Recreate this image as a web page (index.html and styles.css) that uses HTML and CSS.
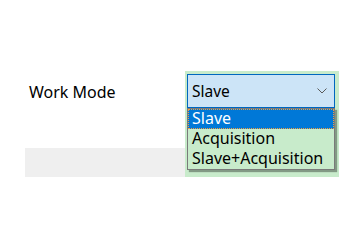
FILE: index.html
```html
<!DOCTYPE html>
<html lang="en">
<head>
    <meta charset="UTF-8">
    <meta name="viewport" content="width=device-width, initial-scale=1.0">
    <title>Work Mode</title>
    <link rel="stylesheet" href="styles.css">
</head>
<body>
    <div class="page">
        <!-- Work mode row -->
        <div class="row">
            <span class="label">Work Mode</span>
            <div class="combo">
                <div class="select">
                    <span>Slave</span>
                    <svg class="chevron" width="10" height="6" viewBox="0 0 10 6">
                        <polyline points="0.5,0.5 5,5 9.5,0.5" fill="none" stroke="#5a5a5a" stroke-width="1"/>
                    </svg>
                </div>
            </div>
        </div>

        <!-- Next row (covered by the open list) -->
        <div class="bar"></div>

        <!-- Open dropdown list -->
        <div class="popup">
            <ul class="list">
                <li class="active">Slave</li>
                <li>Acquisition</li>
                <li>Slave+Acquisition</li>
            </ul>
        </div>
    </div>
</body>
</html>
```

FILE: styles.css
```css
/* General Styles */
html, body {
    margin: 0;
    padding: 0;
    background-color: #fff;
}
body {
    font-family: "Noto Sans", "Open Sans", sans-serif;
    color: #000;
}
.page {
    position: relative;
    padding: 71px 0 0 25px;
}

/* Work mode row */
.row {
    display: flex;
    align-items: center;
    height: 37px;
}
.label {
    width: 160px;
    padding-left: 4px;
    box-sizing: border-box;
    font-size: 16px;
    margin-top: 4px;
}
.combo {
    background-color: #c8ebcb;
    padding: 3px 4px 0 2px;
    width: 148px;
}
.select {
    height: 34px;
    box-sizing: border-box;
    border: 1px solid #0067c0;
    background-color: #cce4f7;
    display: flex;
    align-items: center;
    justify-content: space-between;
    padding: 0 7px 0 4px;
    font-size: 15.5px;
}
.chevron {
    display: block;
}

/* Next row */
.bar {
    margin-top: 40px;
    width: 312px;
    height: 29px;
    background-color: #efefef;
}

/* Dropdown list */
.popup {
    position: absolute;
    top: 108px;
    left: 185px;
    width: 148px;
    padding: 0 4px 7px 2px;
    background-color: #c8ebcb;
}
.list {
    list-style: none;
    margin: 0;
    padding: 0;
    border: 1px solid #7a7a7a;
    box-shadow: 2px 2px 1px rgba(0, 0, 0, 0.35);
    background-color: #c8ebcb;
    font-size: 16px;
}
.list li {
    height: 20px;
    line-height: 19px;
    padding-left: 4px;
    box-sizing: border-box;
}
.list li.active {
    background-color: #0078d7;
    color: #fff;
    outline: 1px dotted #f0a040;
    outline-offset: -1px;
}
```
